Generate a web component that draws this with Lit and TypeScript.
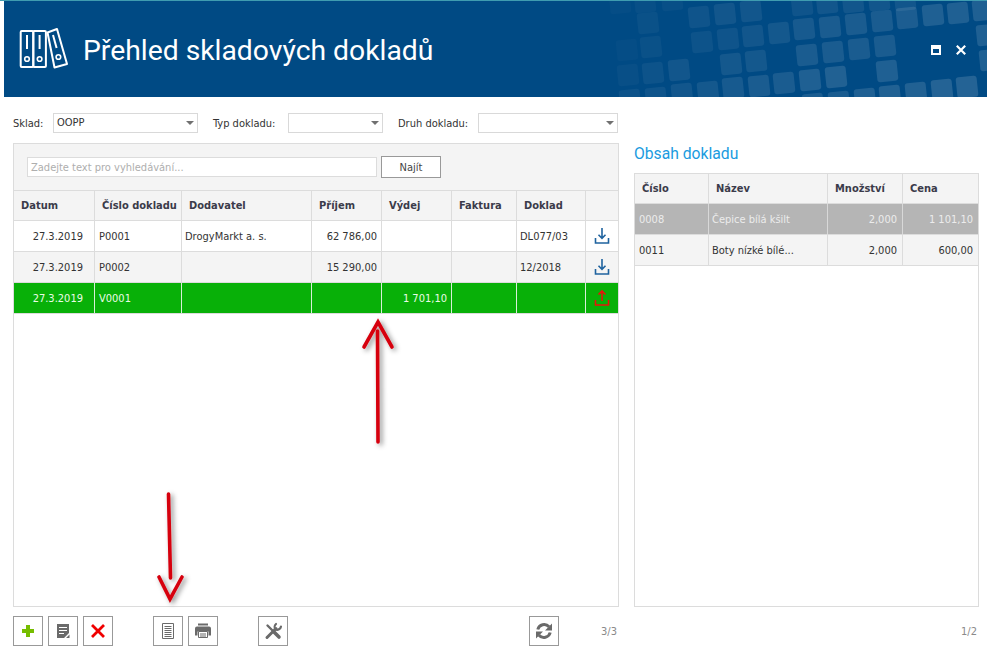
import { LitElement, html, css, svg } from "lit";
import { customElement } from "lit/decorators.js";

// x, y, opacity of the decorative squares in the header band
const SQUARES: [number, number, number][] = [
  [620,3,.02],[645,2,.03],[672,0,.03],[802,5,.06],[827,3,.07],[853,2,.07],[879,0,.07],[905,0,.07],
  [648,23,.04],[699,17,.06],[725,14,.07],[751,11,.07],
  [702,42,.05],[728,39,.06],[753,36,.07],[779,33,.08],[804,29,.09],[830,27,.1],[856,24,.1],[882,21,.1],[907,18,.11],[933,15,.12],[958,13,.12],[983,10,.12],
  [627,50,.02],[651,47,.04],[807,55,.1],[833,52,.1],[859,49,.1],[885,46,.1],[987,35,.12],
  [628,75,.03],[653,73,.05],[679,70,.07],[731,64,.08],[756,61,.08],[887,71,.12],[990,60,.12],
  [630,100,.05],[656,98,.06],[682,94,.07],[708,92,.08],[733,88,.09],[759,86,.1],[784,83,.1],[810,80,.12],[836,77,.13],[813,104,.1],[839,102,.1],[865,99,.12],[890,96,.13],[916,93,.13],[942,90,.14],[967,87,.14],
];

@customElement("app-root")
export class AppRoot extends LitElement {
  static styles = css`
    :host { display: block; position: relative; width: 991px; height: 658px; overflow: hidden; background: #fff;
      font-family: "DejaVu Sans Condensed", "DejaVu Sans", sans-serif; font-size: 11px; color: #333; }
    .stripe { height: 1px; width: 987px; background: #3f9cb0; }
    .header { position: relative; margin: 0 4px; height: 96px; background: #004a84; display: flex; align-items: center; overflow: hidden; color: #fff; }
    .pattern { position: absolute; left: -4px; top: -1px; width: 991px; height: 97px; }
    .logo { position: relative; width: 50px; height: 42px; margin-left: 15px; margin-top: -3px; }
    h1 { position: relative; margin: 3px 0 0 14px; font-family: Roboto, "Noto Sans", sans-serif; font-size: 28.3px; line-height: 36px; font-weight: 400; flex: 1; }
    .win { position: relative; display: flex; gap: 15px; margin-right: 21px; margin-top: 2px; }
    .win svg { display: block; width: 10px; height: 10px; }
    .filters { display: flex; align-items: center; height: 20px; margin: 16px 0 0 13px; }
    .filters label { white-space: nowrap; }
    .l1 { width: 40px; }
    .l2 { width: 75px; }
    .l3 { width: 80px; }
    .select { position: relative; height: 20px; box-sizing: border-box; border: 1px solid #d9d9d9; background: #fff; display: flex; align-items: center; padding: 0 0 2px 3px; }
    .select::after { content: ""; position: absolute; right: 3px; top: 7px; border: 4px solid transparent; border-top: 4px solid #707070; border-bottom: 0; }
    .s1 { width: 145px; margin-right: 15px; }
    .s2 { width: 95px; margin-right: 15px; }
    .s3 { width: 140px; }
    .main { display: flex; margin: 10px 0 0 13px; gap: 15px; }
    .left { width: 606px; height: 464px; box-sizing: border-box; border: 1px solid #dcdcdc; }
    .search { height: 47px; box-sizing: border-box; background: #f4f4f4; border-bottom: 1px solid #dcdcdc; display: flex; align-items: center; padding: 0 0 0 13px; gap: 4px; }
    .input { width: 350px; height: 20px; box-sizing: border-box; border: 1px solid #dcdcdc; background: #fff; color: #aeaeae; padding-left: 3px; display: flex; align-items: center; }
    .find { width: 60px; height: 22px; box-sizing: border-box; border: 1px solid #999; background: #fff; display: flex; align-items: center; justify-content: center; color: #444; }
    .row { display: grid; height: 31px; box-sizing: border-box; border-bottom: 1px solid #dcdcdc; }
    .lt { grid-template-columns: 81px 87px 130px 70px 70px 65px 69px 32px; }
    .rt { grid-template-columns: 74px 119px 75px 75px; }
    .row.head { height: 30px; background: #f4f4f4; }
    .c { border-right: 1px solid #dcdcdc; display: flex; align-items: center; padding: 0 4px 0 4px; white-space: nowrap; overflow: hidden; min-width: 0; }
    .c:last-child { border-right: 0; }
    .head .c { font-weight: 700; color: #3b3b4a; padding-left: 7px; }
    .t3 { padding-left: 3px; }
    .r { justify-content: flex-end; }
    .r5 { padding-right: 5px; }
    .date { padding-right: 11px; }
    .center { justify-content: center; padding: 0; }
    .even { background: #f4f4f4; }
    .green { background: #08b008; color: #eafbe6; }
    .green .c { border-right-color: #d8efd8; }
    .grey { background: #b5b5b5; color: #ececec; }
    .grey .c { border-right-color: #d8d8d8; }
    .c svg { display: block; width: 16px; height: 18px; }
    .right { width: 345px; }
    h2 { margin: 0; height: 30px; font-family: Roboto, "Noto Sans", sans-serif; font-size: 15.7px; line-height: 21px; font-weight: 400; color: #1a9be0; }
    .panel { height: 434px; box-sizing: border-box; border: 1px solid #dcdcdc; }
    .footer { display: flex; align-items: center; margin: 9px 0 0 13px; width: 964px; }
    .btn { width: 30px; height: 30px; box-sizing: border-box; border: 1px solid #999; background: #fff; display: flex; align-items: center; justify-content: center; margin-right: 5px; }
    .btn svg { display: block; width: 22px; height: 22px; }
    .far { margin-left: 35px; }
    .refresh { margin-left: 236px; margin-right: 0; }
    .pg { color: #8a8a8a; text-align: right; }
    .pg1 { width: 58px; margin-right: 0; }
    .pg2 { width: 360px; }
    .arrows { position: absolute; left: 0; top: 0; width: 991px; height: 658px; pointer-events: none; }
  `;

  private dl = svg`<path d="M8 1v10M4.500 7.800 8 11.300l3.500-3.500" fill="none" stroke="#1f639f" stroke-width="1.6"/><path d="M1.500 11v5h13v-5" fill="none" stroke="#1f639f" stroke-width="1.6"/>`;
  private ul = svg`<path d="M8 12V2M4.500 5.500 8 2l3.500 3.500" fill="none" stroke="#e8140a" stroke-width="1.6"/><path d="M1.500 11v5h13v-5" fill="none" stroke="#e8140a" stroke-width="1.6"/>`;

  private row(cls: string, date: string, num: string, sup: string, inc: string, out: string, doc: string, icon: unknown) {
    return html`<div class="row lt ${cls}">
      <div class="c r date">${date}</div><div class="c">${num}</div><div class="c t3">${sup}</div>
      <div class="c r">${inc}</div><div class="c r">${out}</div><div class="c"></div><div class="c t3">${doc}</div>
      <div class="c center"><svg viewBox="0 0 16 18">${icon}</svg></div>
    </div>`;
  }

  render() {
    return html`
      <div class="stripe"></div>
      <header class="header">
        <svg class="pattern" viewBox="0 0 991 97">
          ${SQUARES.map(([x, y, o]) => svg`<rect x=${x - 10.5} y=${y - 10.5} width="21" height="21" rx="3" fill="#fff" fill-opacity=${o} transform="rotate(-6 ${x} ${y})"/>`)}
        </svg>
        <svg class="logo" viewBox="0 0 50 42" fill="none" stroke="#fff">
          <rect x="1.700" y="4" width="12.600" height="36" rx="1" stroke-width="2"/>
          <rect x="14.300" y="4" width="12.600" height="36" rx="1" stroke-width="2"/>
          <path d="M8 8v14M20.600 8v14" stroke-width="2"/>
          <circle cx="8" cy="32" r="2.300" stroke-width="1.6"/><circle cx="20.600" cy="32" r="2.300" stroke-width="1.6"/>
          <path d="M28.500 5.500 38 2l10 35-12.500 3.500z" stroke-width="2" stroke-linejoin="round"/>
          <path d="M34 8l3.600 13" stroke-width="2"/>
          <circle cx="39.400" cy="30" r="2.300" stroke-width="1.6"/>
        </svg>
        <h1>Přehled skladových dokladů</h1>
        <div class="win">
          <svg viewBox="0 0 10 10"><path fill-rule="evenodd" fill="#fff" d="M0 0h10v10H0zM2 4v4h6V4z"/></svg>
          <svg viewBox="0 0 10 10"><path d="M.8.8l8.400 8.400M9.200.8.800 9.200" stroke="#fff" stroke-width="2.2"/></svg>
        </div>
      </header>

      <div class="filters">
        <label class="l1">Sklad:</label><div class="select s1">OOPP</div>
        <label class="l2">Typ dokladu:</label><div class="select s2"></div>
        <label class="l3">Druh dokladu:</label><div class="select s3"></div>
      </div>

      <div class="main">
        <section class="left">
          <div class="search">
            <div class="input">Zadejte text pro vyhledávání...</div>
            <div class="find">Najít</div>
          </div>
          <div class="row lt head">
            <div class="c">Datum</div><div class="c">Číslo dokladu</div><div class="c">Dodavatel</div><div class="c">Příjem</div>
            <div class="c">Výdej</div><div class="c">Faktura</div><div class="c">Doklad</div><div class="c"></div>
          </div>
          ${this.row("", "27.3.2019", "P0001", "DrogyMarkt a. s.", "62 786,00", "", "DL077/03", this.dl)}
          ${this.row("even", "27.3.2019", "P0002", "", "15 290,00", "", "12/2018", this.dl)}
          ${this.row("green", "27.3.2019", "V0001", "", "", "1 701,10", "", this.ul)}
        </section>
        <section class="right">
          <h2>Obsah dokladu</h2>
          <div class="panel">
            <div class="row rt head">
              <div class="c">Číslo</div><div class="c">Název</div><div class="c">Množství</div><div class="c">Cena</div>
            </div>
            <div class="row rt grey">
              <div class="c">0008</div><div class="c t3">Čepice bílá kšilt</div><div class="c r r5">2,000</div><div class="c r r5">1 101,10</div>
            </div>
            <div class="row rt even">
              <div class="c">0011</div><div class="c t3">Boty nízké bílé...</div><div class="c r r5">2,000</div><div class="c r r5">600,00</div>
            </div>
          </div>
        </section>
      </div>

      <footer class="footer">
        <div class="btn"><svg viewBox="0 0 22 22"><path d="M9 5h4v4h4v4h-4v4H9v-4H5V9h4z" fill="#76bd00"/></svg></div>
        <div class="btn"><svg viewBox="0 0 22 22"><path fill="#6a6a6a" fill-rule="evenodd" d="M5 4h12v9l-5 5H5zM7 7v1h8V7zm0 3v1h8v-1zm0 3v1h5v-1zm7 5 3.500-3.500V18z"/></svg></div>
        <div class="btn"><svg viewBox="0 0 22 22"><path d="M5 5l12 12M17 5 5 17" stroke="#f00000" stroke-width="2.8"/></svg></div>
        <div class="btn far"><svg viewBox="0 0 22 22"><path d="M5.500 3.500h11v15h-11z" fill="#fff" stroke="#6a6a6a"/><path d="M7.500 6.500h7M7.500 8.500h7M7.500 10.500h7M7.500 12.500h7M7.500 14.500h7M7.500 16.500h7" stroke="#6a6a6a"/></svg></div>
        <div class="btn"><svg viewBox="0 0 22 22"><path fill="#6a6a6a" d="M6 3.500h10v2H6zM5 6.500h12a2 2 0 0 1 2 2v7h-2.500v-4h-11v4H3v-7a2 2 0 0 1 2-2z"/><path d="M6.500 11.500h9v6h-9zM8 14h6M8 16h6" fill="#fff" stroke="#6a6a6a"/></svg></div>
        <div class="btn far"><svg viewBox="0 0 22 22"><g fill="none" stroke="#6a6a6a" stroke-linecap="round"><path d="M5.500 5.500 11 11" stroke-width="2.400"/><path d="M12 12l5 5" stroke-width="3.600"/><path d="M5 17.500 14 8.500" stroke-width="3"/><path d="M19 6.500a4 4 0 0 1-5.500 3 4 4 0 0 1 .5-5.500" stroke-width="2.200"/></g></svg></div>
        <div class="btn refresh"><svg viewBox="0 0 22 22"><path d="M4.800 9.500A6.500 6.500 0 0 1 16 6.800M17.200 12.500A6.500 6.500 0 0 1 6 15.200" fill="none" stroke="#6a6a6a" stroke-width="3"/><path fill="#6a6a6a" d="M19 3.500v7h-7zM3 18.500v-7h7z"/></svg></div>
        <div class="pg pg1">3/3</div>
        <div class="pg pg2">1/2</div>
      </footer>

      <svg class="arrows" viewBox="0 0 991 658">
        <defs><filter id="s" x="-80%" y="-20%" width="260%" height="140%"><feDropShadow dx="2.500" dy="2" stdDeviation="2.500" flood-color="#000" flood-opacity=".45"/></filter></defs>
        <g fill="none" stroke="#d6000f" stroke-width="3.600" stroke-linecap="round" filter="url(#s)">
          <path d="M378 442 377.500 331M364 347l14-25 14 25"/>
          <path d="M168.500 494 170.500 578M159 577l11 22 12-22"/>
        </g>
      </svg>
    `;
  }
}
